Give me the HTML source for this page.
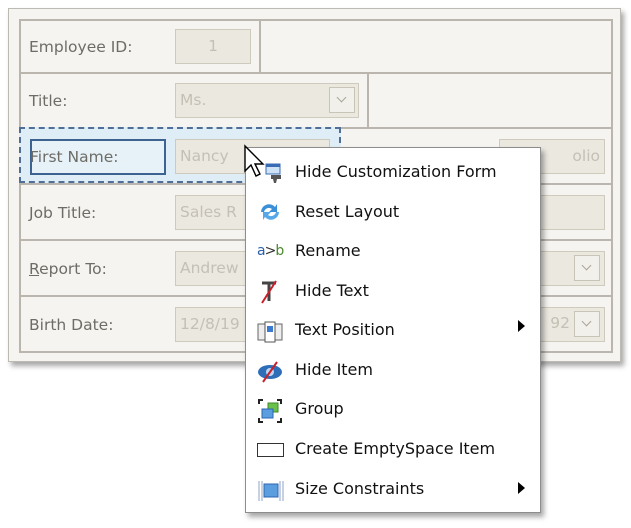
<!DOCTYPE html><html><head><style>
body{margin:0;width:631px;height:528px;background:#fff;position:relative;overflow:hidden;font-family:"DejaVu Sans","Liberation Sans",sans-serif}
.a{position:absolute;box-sizing:border-box}
.panel{left:8px;top:8px;width:613px;height:354px;background:#f6f4f0;border:1px solid #bdbab2;box-shadow:3px 4px 5px rgba(0,0,0,.35)}
.cell{border:2px solid #bab6ad;background:#f6f4f0}
.lbl{font-size:15.5px;color:#6e6c66}
.inp{background:#ebe8e0;border:1px solid #cfcabe;color:#c4c0b6;font-size:15.5px;padding:5px 4px;line-height:22px;overflow:hidden;white-space:nowrap}
.btn{border:1px solid #c9c4b8;background:#f2f0ea;width:26px;height:26px}
.btn::after{content:"";position:absolute;left:8px;top:6px;width:6px;height:6px;border-right:1.5px solid #a8a49a;border-bottom:1.5px solid #a8a49a;transform:rotate(45deg)}
.menu{left:245px;top:147px;width:296px;height:366px;background:#fff;border:1px solid #8d8d8d;box-shadow:3px 4px 5px rgba(0,0,0,.35)}
.it{position:absolute;left:49px;font-size:16px;color:#111}
.ic{position:absolute;left:11px}
.arr{position:absolute;left:272px;width:0;height:0;border-left:7px solid #000;border-top:6px solid transparent;border-bottom:6px solid transparent}
</style></head><body>
<div class="a panel"></div>
<div class="a cell" style="left:19px;top:19px;width:242px;height:55px"></div>
<div class="a cell" style="left:259px;top:19px;width:354px;height:55px"></div>
<div class="a cell" style="left:19px;top:72px;width:350px;height:57px"></div>
<div class="a cell" style="left:367px;top:72px;width:246px;height:57px"></div>
<div class="a cell" style="left:19px;top:127px;width:594px;height:58px"></div>
<div class="a cell" style="left:19px;top:183px;width:594px;height:58px"></div>
<div class="a cell" style="left:19px;top:239px;width:594px;height:58px"></div>
<div class="a cell" style="left:19px;top:295px;width:594px;height:58px"></div>
<div class="a lbl" style="left:29px;top:38px">Employee ID:</div>
<div class="a inp" style="left:175px;top:29px;width:76px;height:35px;text-align:center">1</div>
<div class="a lbl" style="left:29px;top:92px">Title:</div>
<div class="a inp" style="left:175px;top:83px;width:184px;height:35px">Ms.</div>
<div class="a btn" style="left:329px;top:87px"></div>
<div class="a" style="left:19px;top:127px;width:322px;height:56px;background:#dfedf6;border:2px dashed #4f6f98"></div>
<div class="a" style="left:30px;top:139px;width:136px;height:36px;border:2px solid #3d6391;background:#e6f2f8"></div>
<div class="a lbl" style="left:30px;top:148px">First Name:</div>
<div class="a inp" style="left:175px;top:139px;width:155px;height:35px">Nancy</div>
<div class="a inp" style="left:499px;top:139px;width:106px;height:35px;text-align:right">olio</div>
<div class="a lbl" style="left:29px;top:204px">Job Title:</div>
<div class="a inp" style="left:175px;top:195px;width:430px;height:35px">Sales R</div>
<div class="a lbl" style="left:29px;top:260px"><u>R</u>eport To:</div>
<div class="a inp" style="left:175px;top:251px;width:430px;height:35px">Andrew</div>
<div class="a btn" style="left:574px;top:255px"></div>
<div class="a lbl" style="left:29px;top:316px">Birth Date:</div>
<div class="a inp" style="left:175px;top:307px;width:430px;height:35px">12/8/19</div>
<div class="a inp" style="left:530px;top:308px;width:40px;height:30px;border:none;text-align:right;padding:4px 0">92</div>
<div class="a btn" style="left:574px;top:311px"></div>
<div class="a menu">
<svg class="ic" style="top:13px" width="30" height="24"><rect x="9" y="3" width="14" height="10" fill="#cfe2f6" stroke="#3a6cb5"/><rect x="9" y="3" width="14" height="3" fill="#3a6cb5"/><path d="M14 14h10v4h-4l-1 4h-2l-1-4h-2z" fill="#555"/></svg>
<div class="it" style="top:14px">Hide Customization Form</div>
<svg class="ic" style="top:52px" width="26" height="24"><path d="M4 12a8 8 0 0 1 14-5l2-3v8h-8l3-3a5 5 0 0 0-8 3z" fill="#3a8fd8"/><path d="M22 12a8 8 0 0 1-14 5l-2 3v-8h8l-3 3a5 5 0 0 0 8-3z" fill="#56a8e8"/></svg>
<div class="it" style="top:54px">Reset Layout</div>
<div class="ic" style="top:95px;font-size:14px;letter-spacing:-1px"><span style="color:#2b5fa8">a</span><span style="color:#333">&gt;</span><span style="color:#4a8a2a">b</span></div>
<div class="it" style="top:93px">Rename</div>
<svg class="ic" style="top:131px" width="26" height="26"><path d="M5 4h14M12 4v18" stroke="#444" stroke-width="3"/><path d="M19 2L5 24" stroke="#c8202a" stroke-width="2"/></svg>
<div class="it" style="top:133px">Hide Text</div>
<svg class="ic" style="top:172px" width="26" height="24"><rect x="1" y="4" width="24" height="16" fill="#eee" stroke="#666"/><rect x="8" y="2" width="10" height="20" fill="#fff" stroke="#555"/><rect x="10" y="6" width="6" height="6" fill="#3a7ad0"/></svg>
<div class="it" style="top:172px">Text Position</div><div class="arr" style="top:172px"></div>
<svg class="ic" style="top:212px" width="26" height="24"><ellipse cx="13" cy="12" rx="12" ry="7" fill="#2e6db8"/><ellipse cx="13" cy="12" rx="4" ry="4" fill="#bcd6f2"/><path d="M20 2L6 22" stroke="#c8202a" stroke-width="2"/></svg>
<div class="it" style="top:212px">Hide Item</div>
<svg class="ic" style="top:250px" width="26" height="26"><path d="M2 6V2h4M20 2h4v4M24 20v4h-4M6 24H2v-4" stroke="#222" fill="none" stroke-width="2"/><rect x="11" y="5" width="10" height="9" fill="#6bc04a" stroke="#3a8a2a"/><rect x="5" y="11" width="11" height="9" fill="#5a9ee0" stroke="#2d66b0"/></svg>
<div class="it" style="top:251px">Group</div>
<div class="ic" style="top:295px;width:25px;height:12px;border:1.5px solid #333"></div>
<div class="it" style="top:291px">Create EmptySpace Item</div>
<svg class="ic" style="top:330px" width="28" height="26"><path d="M2 3v20M26 3v20M5 3v20M23 3v20" stroke="#8ea6c8"/><rect x="7" y="6" width="14" height="13" fill="#5a9ee0" stroke="#2d66b0"/></svg>
<div class="it" style="top:331px">Size Constraints</div><div class="arr" style="top:334px"></div>
</div>
<svg class="a" style="left:243px;top:144px" width="30" height="40"><path d="M2 2v25l6-6 5 11 4-2-5-10h8z" fill="#fff" stroke="#000" stroke-width="1.4"/></svg>
</body></html>
